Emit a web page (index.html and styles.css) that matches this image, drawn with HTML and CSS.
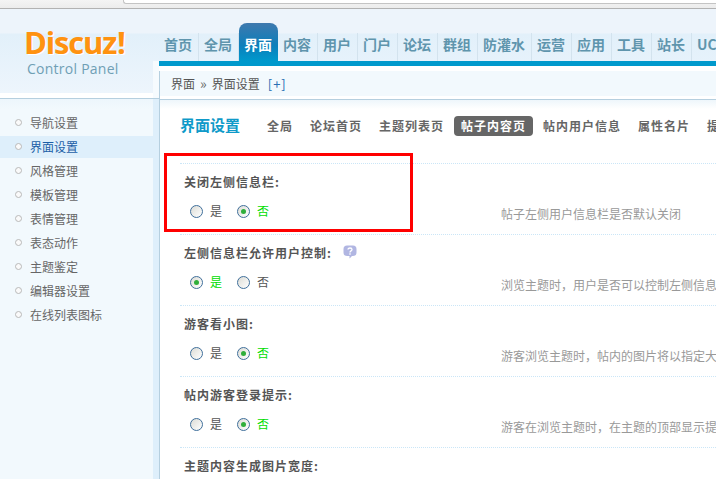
FILE: index.html
```html
<!DOCTYPE html>
<html lang="zh-CN">
<head>
<meta charset="utf-8">
<title>界面设置</title>
<link rel="stylesheet" href="styles.css">
</head>
<body>
<div class="page">
  <div class="chrome"><div class="address"></div></div>
  <div class="shell">
    <aside class="side">
      <div class="brand">
        <div class="logo">Discuz<span class="bang">!</span></div>
        <div class="panel">Control Panel</div>
      </div>
      <div class="side-body">
        <ul class="menu">
          <li class="menu-item"><span class="bullet"></span>导航设置</li>
          <li class="menu-item active"><span class="bullet"></span>界面设置</li>
          <li class="menu-item"><span class="bullet"></span>风格管理</li>
          <li class="menu-item"><span class="bullet"></span>模板管理</li>
          <li class="menu-item"><span class="bullet"></span>表情管理</li>
          <li class="menu-item"><span class="bullet"></span>表态动作</li>
          <li class="menu-item"><span class="bullet"></span>主题鉴定</li>
          <li class="menu-item"><span class="bullet"></span>编辑器设置</li>
          <li class="menu-item"><span class="bullet"></span>在线列表图标</li>
        </ul>
        <div class="gutter"></div>
      </div>
    </aside>
    <main class="main">
      <nav class="nav">
        <a class="nav-item">首页</a>
        <a class="nav-item">全局</a>
        <a class="nav-item current">界面</a>
        <a class="nav-item">内容</a>
        <a class="nav-item">用户</a>
        <a class="nav-item">门户</a>
        <a class="nav-item">论坛</a>
        <a class="nav-item">群组</a>
        <a class="nav-item">防灌水</a>
        <a class="nav-item">运营</a>
        <a class="nav-item">应用</a>
        <a class="nav-item">工具</a>
        <a class="nav-item">站长</a>
        <a class="nav-item">UCenter</a>
      </nav>
      <div class="band"></div>
      <div class="crumb">界面<span class="sep">»</span>界面设置<span class="plus">[+]</span></div>
      <section class="content">
        <div class="tabs">
          <h3 class="heading">界面设置</h3>
          <a class="tab">全局</a>
          <a class="tab">论坛首页</a>
          <a class="tab">主题列表页</a>
          <a class="tab selected">帖子内容页</a>
          <a class="tab">帖内用户信息</a>
          <a class="tab">属性名片</a>
          <a class="tab">提醒信息</a>
        </div>
        <div class="row">
          <div class="row-title">关闭左侧信息栏:</div>
          <div class="row-control">
            <div class="radios">
              <span class="radio"></span><span class="opt">是</span>
              <span class="radio on"></span><span class="opt green">否</span>
            </div>
            <div class="tip">帖子左侧用户信息栏是否默认关闭</div>
          </div>
        </div>
        <div class="row">
          <div class="row-title">左侧信息栏允许用户控制:
            <svg class="help" width="14" height="14" viewBox="0 0 14 14"><path d="M4 0.5h6a3.5 3.5 0 0 1 3.5 3.5v3.5a3.5 3.5 0 0 1-3.5 3.5h-1l-2.5 2.5v-2.5h-2.500a3.500 3.500 0 0 1-3.500-3.500v-3.500a3.500 3.500 0 0 1 3.500-3.500z" fill="#b1b6e2"/><path d="M5 4.500c0-2 4-2 4 0 0 1.500-2 1.300-2 3" fill="none" stroke="#fff" stroke-width="1.300"/><rect x="6.300" y="8.300" width="1.400" height="1.400" fill="#fff"/></svg>
          </div>
          <div class="row-control">
            <div class="radios">
              <span class="radio on"></span><span class="opt green">是</span>
              <span class="radio"></span><span class="opt">否</span>
            </div>
            <div class="tip">浏览主题时&#xFF0C;用户是否可以控制左侧信息栏的显示或隐藏</div>
          </div>
        </div>
        <div class="row">
          <div class="row-title">游客看小图:</div>
          <div class="row-control">
            <div class="radios">
              <span class="radio"></span><span class="opt">是</span>
              <span class="radio on"></span><span class="opt green">否</span>
            </div>
            <div class="tip">游客浏览主题时&#xFF0C;帖内的图片将以指定大小的缩略图显示</div>
          </div>
        </div>
        <div class="row">
          <div class="row-title">帖内游客登录提示:</div>
          <div class="row-control">
            <div class="radios">
              <span class="radio"></span><span class="opt">是</span>
              <span class="radio on"></span><span class="opt green">否</span>
            </div>
            <div class="tip">游客在浏览主题时&#xFF0C;在主题的顶部显示提示信息</div>
          </div>
        </div>
        <div class="row">
          <div class="row-title">主题内容生成图片宽度:</div>
        </div>
        <div class="highlight"></div>
      </section>
    </main>
  </div>
</div>
</body>
</html>
```
FILE: styles.css
```css
* { box-sizing: border-box; }
html, body { margin: 0; padding: 0; background: #fff; }
body {
  font-family: "Noto Sans CJK SC", "Liberation Sans", sans-serif;
  font-size: 12px;
  color: #555;
}
ul { list-style: none; margin: 0; padding: 0; }
h3 { margin: 0; }

.page { width: 716px; height: 479px; overflow: hidden; display: flex; flex-direction: column; }

.chrome {
  height: 9px;
  flex: none;
  background: linear-gradient(#f4f4f4, #ececec);
  border-bottom: 1px solid #b2b2b2;
}
.address {
  height: 4px;
  margin-left: 123px;
  background: #fff;
  border: 1px solid #c4c4c4;
  border-top: 0;
  border-right: 0;
  border-radius: 0 0 0 3px;
}

.shell { flex: 1; display: flex; min-height: 0; }

.side { width: 159px; flex: none; display: flex; flex-direction: column; }
.brand {
  position: relative;
  height: 90px;
  flex: none;
  padding: 18px 0 0 24px;
  border-bottom: 1px solid #b5cfdf;
  background:
    linear-gradient(#fff, #fff) left bottom / 100% 5px no-repeat,
    linear-gradient(#edf4fb 24px, #e2f0fa 25px, #edf5fc 84px);
}
.brand::after {
  content: "";
  position: absolute;
  left: 153px;
  top: 52px;
  width: 6px;
  height: 37px;
  background: #f6fbfe;
}
.logo {
  font-family: "Open Sans", sans-serif;
  font-weight: 700;
  font-size: 31px;
  line-height: 30px;
  letter-spacing: -1.2px;
  color: #ff9210;
  text-shadow: 1px 1px 0 #fff;
}
.bang { margin-left: 1px; }
.panel {
  font-family: "Open Sans", sans-serif;
  font-size: 14px;
  line-height: 18px;
  letter-spacing: 0.25px;
  margin: 3px 0 0 3px;
  color: #6f9fb5;
}

.side-body { flex: 1; display: flex; }
.menu { width: 153px; background: linear-gradient(#edf6fc, #f2f9fd 10px); padding-top: 13px; }
.gutter { width: 6px; background: #deeffb; }
.menu-item {
  display: flex;
  align-items: center;
  height: 22px;
  margin-bottom: 2px;
  padding: 0 0 2px 15px;
  color: #666;
}
.menu-item.active { background: #deeffb; color: #1b5ea6; }
.bullet {
  width: 7px;
  height: 7px;
  margin-right: 8px;
  border: 1px solid #b9b9b9;
  border-radius: 50%;
  background: #fafafa;
}

.main { flex: 1; min-width: 0; display: flex; flex-direction: column; }

.nav {
  height: 52px;
  flex: none;
  display: flex;
  align-items: flex-end;
  overflow: hidden;
  background: linear-gradient(#edf4fb 24px, #e2f0fa 25px, #e6f2fb 52px);
}
.nav-item {
  flex: none;
  height: 28px;
  padding: 0 6px 0 5px;
  font-size: 14px;
  font-weight: 700;
  line-height: 22px;
  color: #5f95ad;
  border-right: 1px solid #d3e3ee;
  white-space: nowrap;
}
.nav-item.current {
  height: 38px;
  padding-top: 10px;
  border: 0;
  border-radius: 8px 8px 0 0;
  color: #fff;
  background: linear-gradient(#3f79ae, #0b7fbb 60%, #0099cc);
}

.band { height: 10px; flex: none; background: linear-gradient(#0099cc 5px, #fff 5px); }

.crumb {
  height: 28px;
  flex: none;
  padding: 0 0 4px 11px;
  display: flex;
  align-items: center;
  background: linear-gradient(#f2f9fd 25px, #fff 25px);
  border-left: 1px solid #b5cfdf;
  color: #555;
}
.sep { margin: 0 5px; font-size: 14px; color: #666; }
.plus { margin-left: 8px; font-size: 13px; color: #2a6fb3; letter-spacing: 1px; }

.content {
  position: relative;
  flex: 1;
  min-height: 0;
  border-left: 1px solid #b5cfdf;
  border-top: 1px solid #b5cfdf;
  background: linear-gradient(#eef6fb, #fff 9px);
  padding: 16px 0 0 20px;
  overflow: hidden;
}

.tabs { display: flex; align-items: center; height: 20px; margin-bottom: 27px; white-space: nowrap; }
.heading {
  width: 80px;
  flex: none;
  padding-bottom: 3px;
  font-size: 15px;
  font-weight: 700;
  color: #0f9ac9;
}
.tab {
  flex: none;
  height: 20px;
  padding: 0 7px;
  margin-right: 3px;
  font-weight: 700;
  line-height: 20px;
  letter-spacing: 1px;
  color: #666;
  border-radius: 4px;
}
.tab.selected { background: #666; color: #fff; }

.row {
  height: 71px;
  padding-top: 8px;
  border-top: 1px dotted #cbe6f7;
}
.row-title {
  height: 20px;
  display: flex;
  align-items: center;
  padding-bottom: 2px;
  margin-left: 4px;
  font-weight: 700;
  letter-spacing: 1px;
  color: #555;
  white-space: nowrap;
}
.help { flex: none; margin-left: 11px; }
.row-control { display: flex; height: 24px; margin-top: 7px; white-space: nowrap; }
.radios { width: 311px; flex: none; margin-left: 10px; display: flex; align-items: center; }
.radio {
  width: 13px;
  height: 13px;
  flex: none;
  margin-right: 7px;
  border: 1.5px solid #3f6f9b;
  border-radius: 50%;
  background: linear-gradient(135deg, #dcdcd6, #fff);
  display: flex;
  align-items: center;
  justify-content: center;
}
.radio.on::after {
  content: "";
  width: 5px;
  height: 5px;
  border-radius: 50%;
  background: #2fae3a;
}
.opt { width: 12px; margin-right: 15px; padding-bottom: 1px; color: #555; }
.opt.green { color: #00dd00; }
.tip { padding-top: 6px; color: #999; }

.highlight {
  position: absolute;
  left: 4px;
  top: 53px;
  width: 249px;
  height: 79px;
  border: 3px solid #f00;
}
```
